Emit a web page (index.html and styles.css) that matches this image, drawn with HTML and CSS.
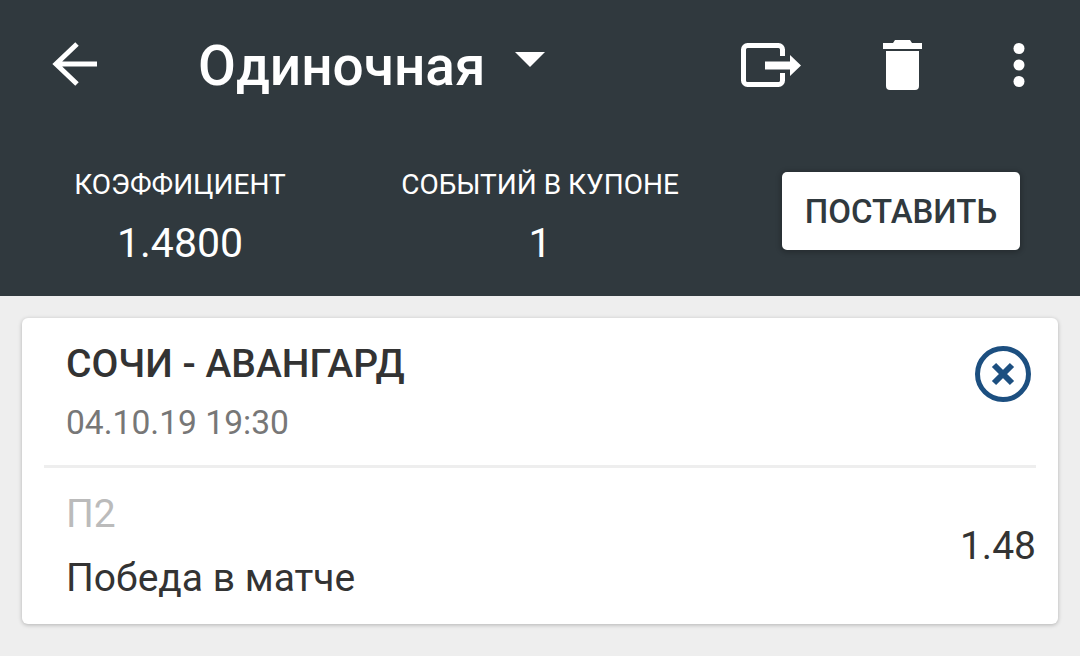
FILE: index.html
```html
<!DOCTYPE html>
<html lang="ru">
<head>
<meta charset="utf-8">
<title>Купон</title>
<link rel="stylesheet" href="styles.css">
</head>
<body>
<header class="header">
  <div class="toolbar">
    <svg class="icon icon-back" width="46" height="44" viewBox="0 0 46 44"><path d="M45 22H4M25 2 4 22l21 20" fill="none" stroke="#fff" stroke-width="5"/></svg>
    <div class="title">Одиночная</div>
    <svg class="icon icon-caret" width="30" height="15" viewBox="0 0 30 15"><path d="M0 0h30L15 15z" fill="#fff"/></svg>
    <svg class="icon icon-export" width="62" height="46" viewBox="0 0 62 46"><path d="M42.500 14V7.500a4 4 0 0 0-4-4h-31a4 4 0 0 0-4 4v31a4 4 0 0 0 4 4h31a4 4 0 0 0 4-4V31" fill="none" stroke="#fff" stroke-width="5"/><path d="M25 19.500h25V13l11 10.500L50 34v-6.500H25z" fill="#fff"/></svg>
    <svg class="icon icon-trash" width="39" height="50" viewBox="0 0 39 50"><path d="M0 3h10l2-3h15l2 3h10v6H0zM3 11h33v35a4 4 0 0 1-4 4H7a4 4 0 0 1-4-4z" fill="#fff"/></svg>
    <svg class="icon icon-more" width="12" height="44" viewBox="0 0 12 44"><circle cx="6" cy="5.500" r="5.500" fill="#fff"/><circle cx="6" cy="22" r="5.500" fill="#fff"/><circle cx="6" cy="38.500" r="5.500" fill="#fff"/></svg>
  </div>
  <div class="stats">
    <div class="stat stat-coef">
      <div class="stat-label">КОЭФФИЦИЕНТ</div>
      <div class="stat-value">1.4800</div>
    </div>
    <div class="stat stat-count">
      <div class="stat-label">СОБЫТИЙ В КУПОНЕ</div>
      <div class="stat-value">1</div>
    </div>
    <button class="place">ПОСТАВИТЬ</button>
  </div>
</header>
<main class="content">
  <section class="card">
    <div class="card-top">
      <div>
        <div class="match">СОЧИ - АВАНГАРД</div>
        <div class="date">04.10.19 19:30</div>
      </div>
      <svg class="icon" width="56" height="56" viewBox="0 0 56 56"><circle cx="28" cy="28" r="25.500" fill="none" stroke="#1c4f80" stroke-width="5"/><path d="M19 19l18 18M37 19 19 37" fill="none" stroke="#1c4f80" stroke-width="6"/></svg>
    </div>
    <div class="card-bottom">
      <div>
        <div class="pick">П2</div>
        <div class="market">Победа в матче</div>
      </div>
      <div class="odds">1.48</div>
    </div>
  </section>
</main>
</body>
</html>
```
FILE: styles.css
```css
* { box-sizing: border-box; }
html, body { margin: 0; height: 100%; }
body {
  background: #eeeeee;
  font-family: Roboto, "Noto Sans", sans-serif;
  overflow: hidden;
}
.icon { display: block; flex: none; }
.header {
  height: 296px;
  background: #30393e;
  color: #fff;
}
.toolbar {
  display: flex;
  align-items: center;
  height: 132px;
  padding-left: 52px;
}
.icon-back { margin-top: -5px; }
.title {
  margin-left: 100px;
  font-size: 55px;
  font-weight: 500;
  line-height: 60px;
  white-space: nowrap;
  width: 287px;
}
.icon-caret { margin-left: 30px; margin-top: -13px; }
.icon-export { margin-left: 195px; margin-top: -2px; }
.icon-trash { margin-left: 81px; margin-top: -2px; }
.icon-more { margin-left: 91px; margin-top: -2px; }
.stats {
  display: flex;
  align-items: flex-start;
  padding-left: 74px;
}
.stat { text-align: center; }
.stat-coef { width: 212px; }
.stat-count { width: 278px; margin-left: 115px; }
.stat-label {
  margin-top: 37px;
  font-size: 28px;
  line-height: 32px;
  white-space: nowrap;
}
.stat-value {
  margin-top: 19px;
  font-size: 41px;
  line-height: 46px;
}
.place {
  width: 238px;
  height: 78px;
  margin: 40px 0 0 103px;
  border: 0;
  border-radius: 5px;
  background: #fff;
  color: #30393e;
  font-family: inherit;
  font-size: 33px;
  font-weight: 500;
  padding: 0;
  box-shadow: 0 1px 5px 2px rgba(0, 0, 0, 0.2);
}
.content { padding: 22px 22px 0; }
.card {
  height: 306px;
  padding: 0 22px;
  background: #fff;
  border-radius: 6px;
  box-shadow: 0 1px 4px rgba(0, 0, 0, 0.25);
}
.card-top {
  display: flex;
  justify-content: space-between;
  align-items: flex-start;
  height: 150px;
  padding: 23px 5px 0 22px;
  border-bottom: 3px solid #eeeeee;
}
.card-top .icon { margin-top: 5px; }
.match {
  font-size: 39px;
  font-weight: 500;
  line-height: 46px;
  color: #333;
}
.date {
  margin-top: 16px;
  font-size: 33.600px;
  line-height: 40px;
  color: #777;
}
.card-bottom {
  display: flex;
  justify-content: space-between;
  align-items: center;
  padding: 23px 0 0 22px;
}
.pick {
  font-size: 39px;
  line-height: 46px;
  color: #bbb;
}
.market {
  margin-top: 18px;
  font-size: 39px;
  line-height: 46px;
  color: #333;
}
.odds {
  font-size: 39px;
  line-height: 46px;
  color: #333;
}
```
